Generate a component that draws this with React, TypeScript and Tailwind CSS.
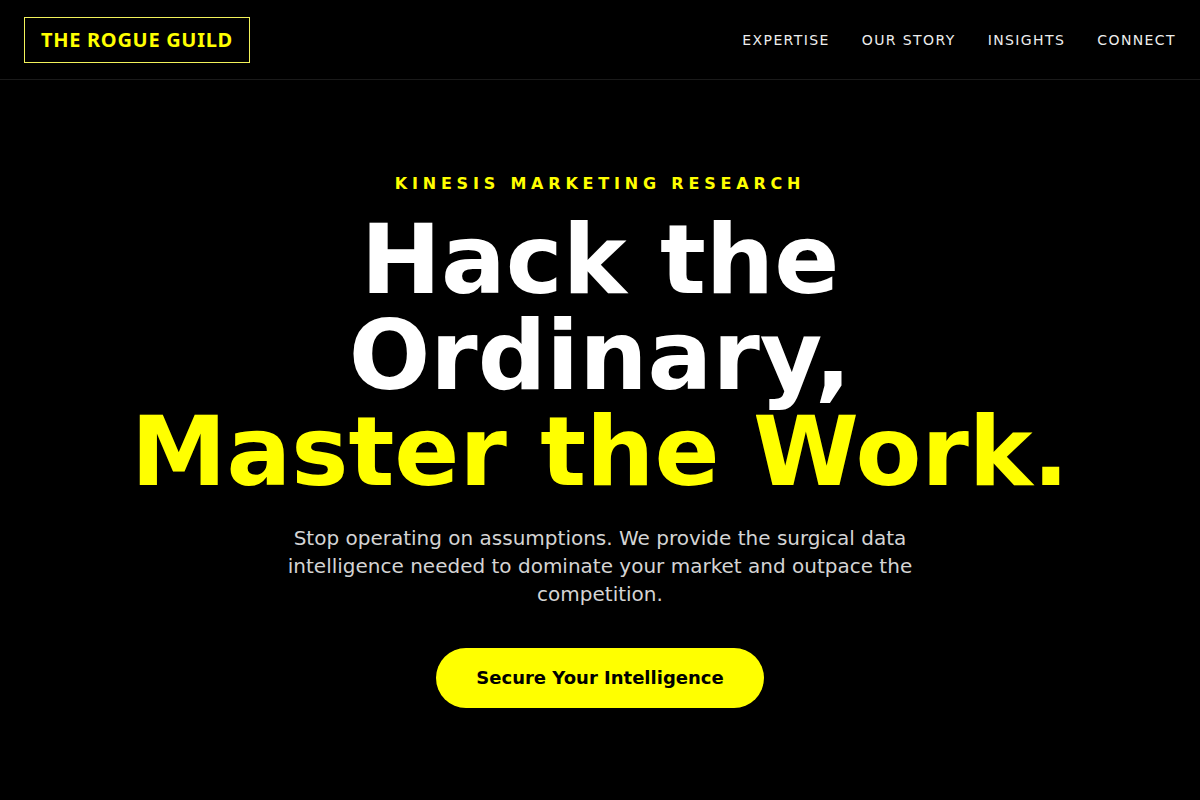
const navItems = ["EXPERTISE", "OUR STORY", "INSIGHTS", "CONNECT"];

const App = () => {
  return (
    <div
      className="min-h-screen flex flex-col bg-black text-white"
      style={{ fontFamily: '"DejaVu Sans", sans-serif' }}
    >
      {/* Header */}
      <header className="h-20 flex items-center justify-between px-6 border-b border-[#1a1a1a]">
        <div
          className="border border-[#f2f25a] px-4 py-2 text-xl font-bold tracking-[0.035em] text-[#ffff00]"
          style={{ fontFamily: '"Noto Sans", sans-serif' }}
        >
          THE ROGUE GUILD
        </div>
        <nav className="flex items-center gap-8">
          {navItems.map((item) => (
            <a
              key={item}
              href="#"
              className="text-sm tracking-widest text-[#ededed]"
            >
              {item}
            </a>
          ))}
        </nav>
      </header>

      {/* Hero */}
      <main className="flex-1 flex flex-col items-center justify-center text-center px-6">
        <p className="mb-4 text-base font-bold tracking-[0.3em] text-[#ffff00]">
          KINESIS MARKETING RESEARCH
        </p>
        <h1 className="text-8xl font-bold leading-none">
          Hack the
          <br />
          Ordinary,
          <br />
          <span className="text-[#ffff00] whitespace-nowrap">
            Master the Work.
          </span>
        </h1>
        <p className="mt-6 max-w-2xl text-xl leading-7 text-[#d4d4d4]">
          Stop operating on assumptions. We provide the surgical data
          intelligence needed to dominate your market and outpace the
          competition.
        </p>
        <button className="mt-10 rounded-full bg-[#ffff00] px-10 py-4 text-lg font-bold leading-7 text-black">
          Secure Your Intelligence
        </button>
      </main>
    </div>
  );
};

export default App;
